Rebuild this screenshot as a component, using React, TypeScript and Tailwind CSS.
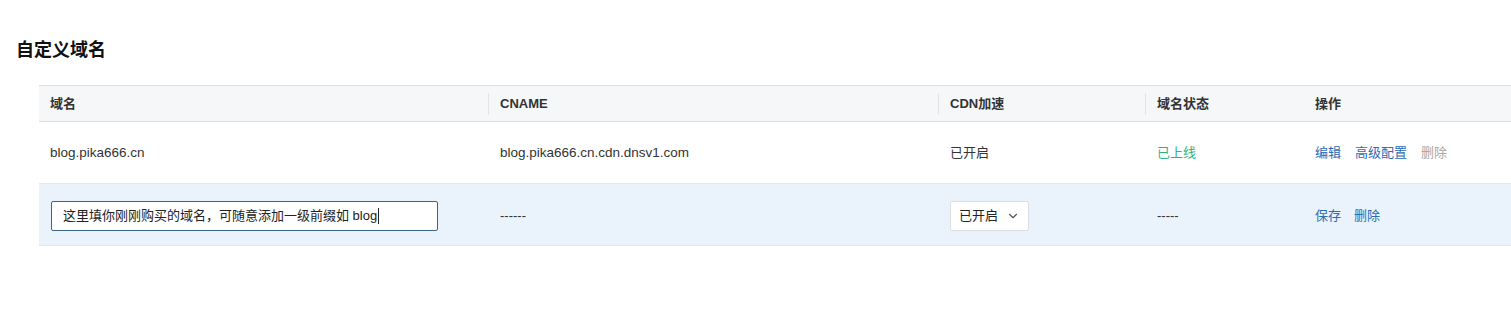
import { ChevronDown } from 'lucide-react';

const font = { fontFamily: '"Liberation Sans", "Noto Sans CJK SC", sans-serif' };

function HeadCell({ label, className, sep = true }: { label: string; className: string; sep?: boolean }) {
  return (
    <div className={`relative flex h-full items-center ${className}`}>
      {sep && <span className="absolute left-0 top-1/2 h-[22px] w-px -translate-y-1/2 bg-[#e2e4e6]" />}
      <span className="pl-3 font-semibold text-[#333]">{label}</span>
    </div>
  );
}

export default function App() {
  return (
    <div className="h-[315px] w-[1511px] overflow-hidden bg-white text-[13px] text-[#333]" style={font}>
      <h2 className="pl-4 pt-[38px] text-[18px] font-bold leading-6 text-[#111]">自定义域名</h2>

      <div className="ml-[39px] mt-[23px] w-[1500px]">
        {/* header */}
        <div className="flex h-[37px] items-center border-y border-[#dcdfe2] bg-[#f5f7f8]">
          <div className="flex h-full w-[449px] items-center pl-[11px] font-semibold">域名</div>
          <HeadCell label="CNAME" className="w-[450px]" />
          <HeadCell label="CDN加速" className="w-[207px]" />
          <HeadCell label="域名状态" className="w-[158px]" />
          <HeadCell label="操作" className="flex-1" sep={false} />
        </div>

        {/* existing row */}
        <div className="flex h-[62px] items-center border-b border-[#e6e9ec] pt-px">
          <div className="w-[449px] pl-[11px] text-[13.5px]">blog.pika666.cn</div>
          <div className="w-[450px] pl-3 text-[13.5px]">blog.pika666.cn.cdn.dnsv1.com</div>
          <div className="w-[207px] pl-3">已开启</div>
          <div className="w-[158px] pl-3 text-[#2bb57d]">已上线</div>
          <div className="flex flex-1 gap-[14px] pl-3">
            <span className="text-[#2b6cb5]">编辑</span>
            <span className="text-[#2b6cb5]">高级配置</span>
            <span className="text-[#a8a8a8]">删除</span>
          </div>
        </div>

        {/* editing row */}
        <div className="flex h-[62px] items-center border-b border-[#dde8f4] bg-[#eaf2fb] pt-[2px]">
          <div className="w-[449px] pl-3">
            <div className="flex h-[30px] w-[387px] items-center rounded-[2px] border border-[#3d6688] bg-white pl-[11px] text-[#222]">
              这里填你刚刚购买的域名，可随意添加一级前缀如 blog
              <span className="ml-px inline-block h-[16px] w-px bg-[#222]" />
            </div>
          </div>
          <div className="w-[450px] pl-3">------</div>
          <div className="w-[207px] pl-3">
            <div className="flex h-[30px] w-[79px] items-center justify-between rounded-[2px] border border-[#dcdfe2] bg-white pl-[8px] pr-[8px] text-[#222]">
              已开启
              <ChevronDown className="h-[14px] w-[14px] text-[#555]" strokeWidth={2} />
            </div>
          </div>
          <div className="w-[158px] pl-3">-----</div>
          <div className="flex flex-1 gap-[13px] pl-3">
            <span className="text-[#2b6cb5]">保存</span>
            <span className="text-[#2b6cb5]">删除</span>
          </div>
        </div>
      </div>
    </div>
  );
}
